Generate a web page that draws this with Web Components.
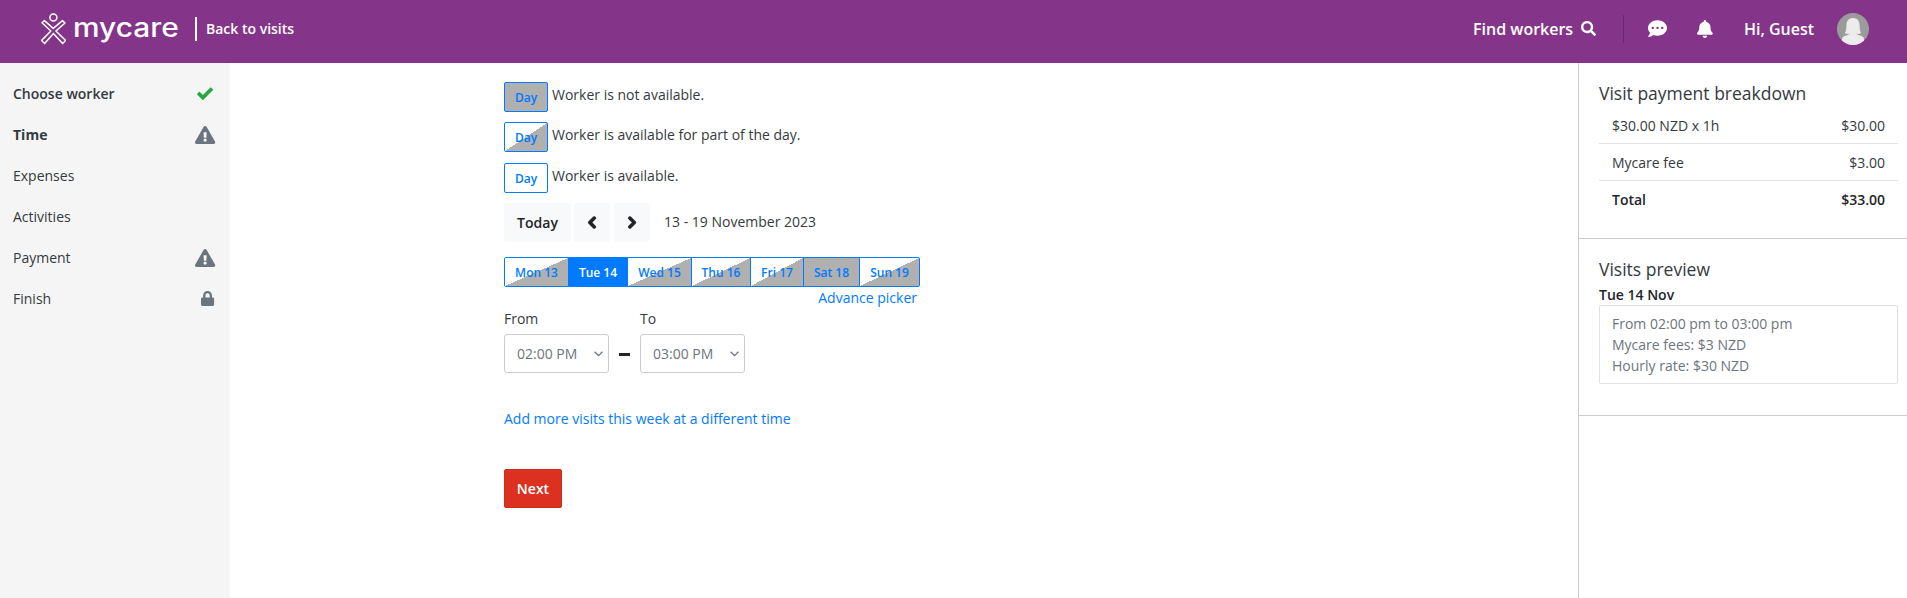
<!DOCTYPE html>
<html lang="en">
<head>
<meta charset="utf-8">
<title>Mycare - Time</title>
<style>
  html, body { margin: 0; height: 100%; }
  body { font-family: "Open Sans", "Noto Sans", sans-serif; font-size: 14px; color: #212529; background: #fff; overflow: hidden; }
</style>
</head>
<body>
<visit-page>
  <app-header slot="header"></app-header>
  <side-nav slot="nav">
    <nav-item state="done" strong>Choose worker</nav-item>
    <nav-item state="warn" current>Time</nav-item>
    <nav-item>Expenses</nav-item>
    <nav-item>Activities</nav-item>
    <nav-item state="warn">Payment</nav-item>
    <nav-item state="lock">Finish</nav-item>
  </side-nav>
  <time-form slot="main"></time-form>
  <visit-summary slot="aside"></visit-summary>
</visit-page>

<script>
(function(w, doc) {
  'use strict';

  const ICONS = {
    check: ['0 0 17 14', 'M.8 7.6 3.2 5.2 6.4 8.4 13.7 1.1 16.2 3.5 6.4 13.2Z'],
    warn: ['0 0 576 512', 'M569.517 440.013C587.975 472.007 564.806 512 527.94 512H48.054c-36.937 0-59.999-40.055-41.577-71.987L246.423 23.985c18.467-32.009 64.72-31.951 83.154 0l239.94 416.028zM288 354c-25.405 0-46 20.595-46 46s20.595 46 46 46 46-20.595 46-46-20.595-46-46-46zm-43.673-165.346l7.418 136c.347 6.364 5.609 11.346 11.982 11.346h48.546c6.373 0 11.635-4.982 11.982-11.346l7.418-136c.375-6.874-5.098-12.654-11.982-12.654h-63.383c-6.884 0-12.356 5.78-11.981 12.654z'],
    lock: ['0 0 448 512', 'M400 224h-24v-72C376 68.2 307.8 0 224 0S72 68.2 72 152v72H48c-26.5 0-48 21.5-48 48v192c0 26.5 21.5 48 48 48h352c26.5 0 48-21.5 48-48V272c0-26.5-21.5-48-48-48zm-104 0H152v-72c0-39.7 32.3-72 72-72s72 32.3 72 72v72z'],
    search: ['0 0 512 512', 'M505 442.7L405.3 343c-4.5-4.5-10.6-7-17-7H372c27.6-35.3 44-79.7 44-128C416 93.1 322.9 0 208 0S0 93.1 0 208s93.1 208 208 208c48.3 0 92.7-16.4 128-44v16.3c0 6.4 2.5 12.5 7 17l99.7 99.7c9.4 9.4 24.6 9.4 33.9 0l28.3-28.3c9.4-9.4 9.4-24.6.1-34zM208 336c-70.7 0-128-57.2-128-128 0-70.7 57.2-128 128-128 70.7 0 128 57.2 128 128 0 70.7-57.2 128-128 128z'],
    bell: ['0 0 448 512', 'M224 512c35.32 0 63.97-28.65 63.97-64H160.03c0 35.35 28.65 64 63.97 64zm215.39-149.71c-19.32-20.76-55.47-51.99-55.47-154.29 0-77.7-54.48-139.9-127.94-155.16V32c0-17.67-14.32-32-31.98-32s-31.98 14.33-31.98 32v20.84C118.56 68.1 64.08 130.3 64.08 208c0 102.3-36.15 133.53-55.47 154.29-6 6.45-8.66 14.16-8.61 21.71.11 16.4 12.98 32 32.1 32h383.8c19.12 0 32-15.6 32.1-32 .05-7.55-2.61-15.27-8.61-21.71z'],
    chat: ['0 0 512 512', 'M256 32C114.6 32 0 125.1 0 240c0 49.6 21.4 95 57 130.7C44.5 421.1 2.7 466 2.2 466.5c-2.2 2.3-2.8 5.7-1.5 8.7S4.8 480 8 480c66.3 0 116-31.8 140.6-51.4 32.7 12.3 69 19.4 107.4 19.4 141.4 0 256-93.1 256-208S397.4 32 256 32zM128 272c-17.7 0-32-14.3-32-32s14.3-32 32-32 32 14.3 32 32-14.3 32-32 32zm128 0c-17.7 0-32-14.3-32-32s14.3-32 32-32 32 14.3 32 32-14.3 32-32 32zm128 0c-17.7 0-32-14.3-32-32s14.3-32 32-32 32 14.3 32 32-14.3 32-32 32z'],
    left: ['0 0 320 512', 'M34.52 239.03L228.87 44.69c9.37-9.37 24.57-9.37 33.94 0l22.67 22.67c9.36 9.36 9.37 24.52.04 33.9L131.49 256l154.02 154.75c9.34 9.38 9.32 24.54-.04 33.9l-22.67 22.67c-9.37 9.37-24.57 9.37-33.94 0L34.52 272.97c-9.37-9.37-9.37-24.57 0-33.94z'],
    right: ['0 0 320 512', 'M285.476 272.971L91.132 467.314c-9.373 9.373-24.569 9.373-33.941 0l-22.667-22.667c-9.357-9.357-9.375-24.522-.04-33.901L188.505 256 34.484 101.255c-9.335-9.379-9.317-24.544.04-33.901l22.667-22.667c9.373-9.373 24.569-9.373 33.941 0L285.475 239.03c9.373 9.372 9.373 24.568.001 33.941z']
  };

  function icon(name, height, color) {
    const [box, d] = ICONS[name];
    return `<svg viewBox="${box}" height="${height}" fill="${color}" style="display:block;overflow:visible"><path d="${d}"/></svg>`;
  }

  class Base extends HTMLElement {
    constructor(html) {
      super();
      this.attachShadow({ mode: 'open' });
      this.shadowRoot.innerHTML = html;
    }
  }

  class VisitPage extends Base {
    constructor() {
      super(`
      <style>
      :host{ display:flex; flex-direction:column; height:598px; }
      .body{ display:flex; flex:1; min-height:0; }
      .main{ flex:1; min-width:0; }
      </style>
      <slot name="header"></slot>
      <div class="body">
        <slot name="nav"></slot>
        <div class="main"><slot name="main"></slot></div>
        <slot name="aside"></slot>
      </div>`);
    }
  }

  class AppHeader extends Base {
    constructor() {
      super(`
      <style>
      :host{ display:flex; align-items:center; height:63px; box-sizing:border-box; padding:0 38px 6px 41px; background:#843589; color:#fff; font-weight:600; }
      .brand{ display:flex; align-items:center; }
      .word{ display:block; font:500 26px/1 "Inter", sans-serif; transform:scaleX(1.15); transform-origin:0 50%; margin:0 0 1px 7px; width:122px; }
      .bar{ width:2px; height:24px; background:#fff; margin:0 9px 0 0; }
      .back{ font-size:14px; color:#fff; }
      .right{ margin-left:auto; display:flex; align-items:center; font-size:16px; }
      .find{ display:flex; align-items:center; gap:8px; }
      .rule{ width:1px; height:28px; background:#6b2a70; margin:0 24px 0 27px; }
      .bell{ margin:0 31px 0 30px; }
      .avatar{ margin-left:23px; display:block; }
      </style>
      <div class="brand">
        <svg width="25" height="32" viewBox="0 0 25 32" fill="none" stroke="#fff" stroke-width="1.5" stroke-linejoin="round">
          <circle cx="12.4" cy="4.6" r="3.5"/>
          <path d="M1 9.8 L3.4 7.6 L12.3 15.4 L21.4 7.6 L24 10 L14.9 18 L24.6 27.4 L21.6 30.6 L12.4 20.4 L3.6 30.6 L.6 27.4 L9.9 18 Z"/>
        </svg>
        <span class="word">mycare</span>
        <span class="bar"></span>
        <span class="back">Back to visits</span>
      </div>
      <div class="right">
        <span class="find">Find workers ${icon('search', 15, '#fff')}</span>
        <span class="rule"></span>
        ${icon('chat', 19, '#fff')}
        <span class="bell">${icon('bell', 18, '#fff')}</span>
        <span>Hi, Guest</span>
        <svg class="avatar" width="32" height="32" viewBox="0 0 32 32">
          <defs><clipPath id="c"><circle cx="16" cy="16" r="16"/></clipPath></defs>
          <g clip-path="url(#c)">
            <rect width="32" height="32" fill="#9b9b9b"/>
            <path d="M16 5c-4.6 0-6.6 3.3-6.6 7.2 0 3.4-.4 6-1.6 8 2 .8 3.6.9 5 .6-1.6 1.4-5.8 2-7.4 3.6L4 32h24l-1.4-7.6c-1.6-1.6-5.8-2.2-7.4-3.6 1.4.3 3 .2 5-.6-1.2-2-1.6-4.6-1.6-8C22.6 8.3 20.6 5 16 5z" fill="#ececec"/>
          </g>
        </svg>
      </div>`);
    }
  }

  class SideNav extends Base {
    constructor() {
      super(`
      <style>
      :host{ display:flex; flex-direction:column; width:230px; box-sizing:border-box; padding:10px 0 0; background:#f5f5f5; }
      </style>
      <slot></slot>`);
    }
  }

  class NavItem extends Base {
    constructor() {
      super(`
      <style>
      :host{ display:flex; align-items:center; justify-content:space-between; height:41px; padding:0 15px 0 13px; color:#343a40; }
      :host([strong]){ font-weight:600; color:#343a40; }
      :host([current]){ font-weight:700; color:#343a40; }
      .i{ display:flex; justify-content:flex-end; }
      </style>
      <span><slot></slot></span>
      <span class="i"></span>`);
    }
    connectedCallback() {
      const state = this.getAttribute('state');
      const box = this.shadowRoot.querySelector('.i');
      if (state === 'done') box.innerHTML = `<span style="margin-right:1px">${icon('check', 15, '#28a745')}</span>`;
      if (state === 'warn') box.innerHTML = icon('warn', 18, '#6c757d');
      if (state === 'lock') box.innerHTML = `<span style="margin-right:1px">${icon('lock', 15, '#6c757d')}</span>`;
    }
  }

  // one Day cell, "kind" is free / part / none
  class DayCell extends Base {
    constructor() {
      super(`
      <style>
      :host{ display:flex; align-items:center; justify-content:center; box-sizing:border-box; height:30px; font-size:12px; font-weight:600; color:#007bff; background:#fff; }
      :host([kind="part"]){ background:linear-gradient(to bottom right, #fff 50%, #b0b0b0 50%); }
      :host([kind="none"]){ background:#b0b0b0; }
      :host([kind="sel"]){ background:#007bff; color:#fff; }
      </style>
      <slot></slot>`);
    }
  }

  class LegendRow extends Base {
    constructor() {
      super(`
      <style>
      :host{ display:flex; align-items:flex-start; color:#343a40; }
      day-cell{ width:44px; border:1px solid #007bff; border-radius:2px; margin-right:4px; }
      span{ line-height:26px; }
      </style>
      <day-cell>Day</day-cell><span><slot></slot></span>`);
    }
    connectedCallback() {
      this.shadowRoot.querySelector('day-cell').setAttribute('kind', this.getAttribute('kind'));
    }
  }

  class WeekNav extends Base {
    constructor() {
      super(`
      <style>
      :host{ display:flex; align-items:center; height:39px; color:#212529; }
      button{ height:39px; border:0; padding:0; border-radius:3px; background:#f8f9fa; font:600 14px "Open Sans", sans-serif; color:#212529; display:flex; align-items:center; justify-content:center; }
      .today{ width:67px; margin-right:3px; }
      .arrow{ width:36px; margin-right:4px; }
      .arrow svg{ stroke:#212529; stroke-width:60; }
      .range{ margin:-2px 0 0 10px; color:#343a40; }
      </style>
      <button class="today">Today</button>
      <button class="arrow">${icon('left', 13, '#212529')}</button>
      <button class="arrow">${icon('right', 13, '#212529')}</button>
      <span class="range">13 - 19 November 2023</span>`);
    }
  }

  class WeekPicker extends Base {
    constructor() {
      super(`
      <style>
      :host{ display:flex; width:416px; box-sizing:border-box; border:1px solid #007bff; border-radius:2px; height:30px; }
      day-cell{ height:28px; border-right:1px solid #007bff; }
      day-cell:last-child{ border-right:0; }
      </style>
      <day-cell kind="part" style="width:64px">Mon 13</day-cell>
      <day-cell kind="sel" style="width:59px">Tue 14</day-cell>
      <day-cell kind="part" style="width:64px">Wed 15</day-cell>
      <day-cell kind="part" style="width:59px">Thu 16</day-cell>
      <day-cell kind="part" style="width:53px">Fri 17</day-cell>
      <day-cell kind="none" style="width:56px">Sat 18</day-cell>
      <day-cell kind="part" style="flex:1">Sun 19</day-cell>`);
    }
  }

  class TimeSelect extends Base {
    constructor() {
      super(`
      <style>
      :host{ display:flex; flex-direction:column; width:105px; color:#343a40; }
      label{ line-height:21px; margin-bottom:5px; }
      .wrap{ position:relative; }
      select{ display:block; appearance:none; height:39px; width:105px; box-sizing:border-box; padding:0 6px 0 12px; border:1px solid #ccc; border-radius:3px; background:#fff; color:#6c757d; font:14px "Open Sans", sans-serif; }
      svg{ position:absolute; right:6px; top:17px; pointer-events:none; }
      </style>
      <label></label>
      <div class="wrap">
        <select></select>
        <svg width="9" height="6" viewBox="0 0 9 6" fill="none" stroke="#6c757d" stroke-width="1.3"><path d="M.6.8 4.5 4.7 8.4.8"/></svg>
      </div>`);
    }
    connectedCallback() {
      this.shadowRoot.querySelector('label').textContent = this.getAttribute('label');
      const opt = doc.createElement('option');
      opt.textContent = this.getAttribute('value');
      this.shadowRoot.querySelector('select').appendChild(opt);
    }
  }

  class TimeForm extends Base {
    constructor() {
      super(`
      <style>
      :host{ display:block; padding:19px 0 0 274px; }
      a{ color:#007bff; text-decoration:none; }
      legend-row{ height:40px; }
      legend-row:nth-of-type(2){ height:41px; }
      week-nav{ margin-bottom:15px; }
      .adv{ width:413px; text-align:right; line-height:21px; margin-top:0; }
      .times{ display:flex; align-items:flex-end; margin-top:0; }
      .dash{ width:11px; height:3px; background:#212529; margin:0 10px 17px 10px; }
      .more{ display:block; margin-top:35px; line-height:21px; }
      button{ display:block; margin-top:40px; width:58px; height:39px; padding:0; border:1px solid #c82d1d; border-radius:2px; background:#dc3020; color:#fff; font:600 14px "Open Sans", sans-serif; }
      </style>
      <legend-row kind="none">Worker is not available.</legend-row>
      <legend-row kind="part">Worker is available for part of the day.</legend-row>
      <legend-row kind="free">Worker is available.</legend-row>
      <week-nav></week-nav>
      <week-picker></week-picker>
      <div class="adv"><a href="#">Advance picker</a></div>
      <div class="times">
        <time-select label="From" value="02:00 PM"></time-select>
        <span class="dash"></span>
        <time-select label="To" value="03:00 PM"></time-select>
      </div>
      <a class="more" href="#">Add more visits this week at a different time</a>
      <button>Next</button>`);
    }
  }

  class PayRow extends Base {
    constructor() {
      super(`
      <style>
      :host{ display:flex; justify-content:space-between; align-items:center; height:37px; box-sizing:border-box; padding:0 13px; color:#343a40; border-bottom:1px solid #dee2e6; }
      :host([total]){ font-weight:600; border-bottom:0; color:#212529; }
      </style>
      <span><slot></slot></span><span><slot name="amt"></slot></span>`);
    }
  }

  class VisitSummary extends Base {
    constructor() {
      super(`
      <style>
      :host{ display:block; width:329px; box-sizing:border-box; border-left:1px solid #ccc; color:#212529; }
      section{ padding:0 9px 0 20px; border-bottom:1px solid #ccc; box-sizing:border-box; }
      h2{ margin:0; font-size:17.5px; font-weight:400; line-height:24px; color:#343a40; }
      .pay{ height:176px; padding-top:18px; }
      .pay h2{ margin-bottom:2px; }
      .prev{ height:177px; padding-top:18px; }
      .date{ font-weight:600; line-height:21px; margin-top:3px; }
      .box{ margin-top:0; padding:7px 12px; border:1px solid #dee2e6; border-radius:2px; height:79px; box-sizing:border-box; color:#6c757d; line-height:21px; }
      </style>
      <section class="pay">
        <h2>Visit payment breakdown</h2>
        <pay-row>$30.00 NZD x 1h<span slot="amt">$30.00</span></pay-row>
        <pay-row>Mycare fee<span slot="amt">$3.00</span></pay-row>
        <pay-row total>Total<span slot="amt">$33.00</span></pay-row>
      </section>
      <section class="prev">
        <h2>Visits preview</h2>
        <div class="date">Tue 14 Nov</div>
        <div class="box">From 02:00 pm to 03:00 pm<br>Mycare fees: $3 NZD<br>Hourly rate: $30 NZD</div>
      </section>`);
    }
  }

  const defs = {
    'visit-page': VisitPage, 'app-header': AppHeader, 'side-nav': SideNav, 'nav-item': NavItem,
    'day-cell': DayCell, 'legend-row': LegendRow, 'week-nav': WeekNav, 'week-picker': WeekPicker,
    'time-select': TimeSelect, 'time-form': TimeForm, 'pay-row': PayRow, 'visit-summary': VisitSummary
  };
  Object.keys(defs).forEach(name => customElements.define(name, defs[name]));

})(window, document);
</script>
</body>
</html>
